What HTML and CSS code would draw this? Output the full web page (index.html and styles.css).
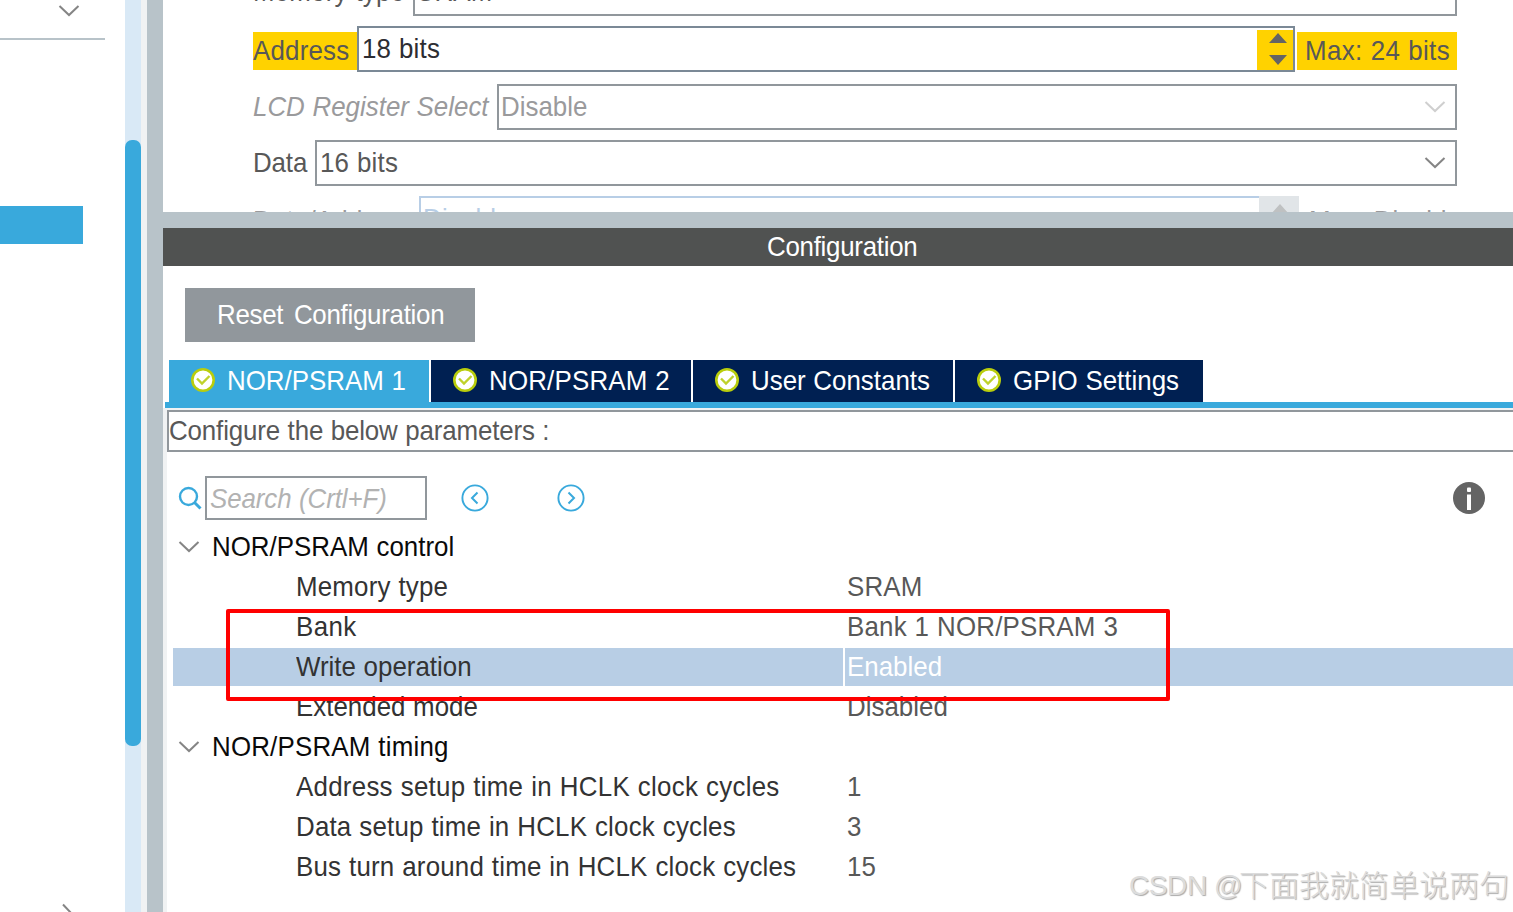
FILE: index.html
```html
<!DOCTYPE html>
<html lang="en">
<head>
    <meta charset="UTF-8">
    <meta name="viewport" content="width=device-width, initial-scale=1.0">
    <title>Configuration</title>
    <link rel="stylesheet" href="styles.css">
</head>
<body>
    <svg class="symbols">
        <symbol id="chevron" viewBox="0 0 22 14">
            <path d="M1.5 2 L11 11 L20.5 2" fill="none" stroke="currentColor" stroke-width="2"/>
        </symbol>
        <symbol id="check" viewBox="0 0 24 24">
            <circle cx="12" cy="12" r="10.7" fill="#fff" stroke="#b9cd0c" stroke-width="2.6"/>
            <path d="M6 10.5 L11 15.5 L18.5 8" fill="none" stroke="#bfd22b" stroke-width="2.4"/>
        </symbol>
    </svg>

    <div class="app">
        <div class="sidebar">
            <div class="sidebar-head"><svg class="chevron"><use href="#chevron"/></svg></div>
            <div class="sidebar-selected"></div>
            <svg class="chevron sidebar-more"><use href="#chevron"/></svg>
        </div>
        <div class="scrollbar"><div class="scroll-thumb"></div></div>
        <div class="splitter"></div>

        <div class="content">
            <div class="mode-form">
                <div class="form-row row-memory">
                    <label class="label-memory"><span class="t">Memory type</span></label>
                    <div class="field"><span class="t">SRAM</span></div>
                </div>
                <div class="form-row row-address">
                    <label class="label-address warn"><span class="t">Address</span></label>
                    <div class="field spin-field">
                        <span class="t">18 bits</span>
                        <div class="spinner warn">
                            <svg width="18" height="34" viewBox="0 0 18 34">
                                <path d="M9 1 L18 11 H0 Z M0 23 H18 L9 33 Z" fill="#646464"/>
                            </svg>
                        </div>
                    </div>
                    <div class="max warn"><span class="t ls-4">Max: 24 bits</span></div>
                </div>
                <div class="form-row disabled">
                    <label class="label-lcd"><span class="t ls-0"><i>LCD Register Select</i></span></label>
                    <div class="field"><span class="t ls-0">Disable</span><svg class="chevron"><use href="#chevron"/></svg></div>
                </div>
                <div class="form-row">
                    <label class="label-data"><span class="t ls-n2">Data</span></label>
                    <div class="field field-data"><span class="t">16 bits</span><svg class="chevron"><use href="#chevron"/></svg></div>
                </div>
                <div class="form-row row-muted">
                    <label class="label-mux"><span class="t">Data/Address</span></label>
                    <div class="field field-off"><span class="t">Disable</span></div>
                    <div class="spinner spinner-off">
                        <svg width="18" height="34" viewBox="0 0 18 34">
                            <path d="M9 1 L18 11 H0 Z M0 23 H18 L9 33 Z" fill="#bfc1c2"/>
                        </svg>
                    </div>
                    <div class="max"><span class="t">Max: Disable</span></div>
                </div>
            </div>

            <div class="config-title"><span class="t ls-n3">Configuration</span></div>

            <div class="actions">
                <button class="reset-btn"><span class="t">Reset Configuration</span></button>
            </div>

            <div class="tabs">
                <div class="tab active"><svg class="check"><use href="#check"/></svg><span class="t ls-0">NOR/PSRAM 1</span></div>
                <div class="tab"><svg class="check"><use href="#check"/></svg><span class="t">NOR/PSRAM 2</span></div>
                <div class="tab"><svg class="check"><use href="#check"/></svg><span class="t ls-0">User Constants</span></div>
                <div class="tab tab-last"><svg class="check"><use href="#check"/></svg><span class="t ls-0">GPIO Settings</span></div>
            </div>

            <div class="params">
                <div class="hint"><span class="t ls-n2">Configure the below parameters :</span></div>

                <div class="toolbar">
                    <svg class="search-icon" viewBox="0 0 24 24">
                        <circle cx="10.5" cy="10.5" r="8.5" fill="none" stroke="#39a9dc" stroke-width="2.4"/>
                        <path d="M16.5 16.5 L22.5 22.5" stroke="#39a9dc" stroke-width="3"/>
                    </svg>
                    <div class="search-box"><span class="t ls-n1">Search (Crtl+F)</span></div>
                    <svg class="nav-icon" viewBox="0 0 28 28">
                        <circle cx="14" cy="14" r="12.6" fill="none" stroke="#39a9dc" stroke-width="1.9"/>
                        <path d="M16.5 8.5 L11 14 L16.5 19.5" fill="none" stroke="#39a9dc" stroke-width="2"/>
                    </svg>
                    <svg class="nav-icon" viewBox="0 0 28 28">
                        <circle cx="14" cy="14" r="12.6" fill="none" stroke="#39a9dc" stroke-width="1.9"/>
                        <path d="M11.5 8.5 L17 14 L11.5 19.5" fill="none" stroke="#39a9dc" stroke-width="2"/>
                    </svg>
                    <svg class="info-icon" viewBox="0 0 32 32">
                        <circle cx="16" cy="16" r="16" fill="#646464"/>
                        <rect x="14" y="5.5" width="4" height="4.5" rx="1" fill="#fff"/>
                        <rect x="14" y="12.5" width="4" height="15.5" fill="#fff"/>
                    </svg>
                </div>

                <div class="tree">
                    <div class="group"><svg class="chevron"><use href="#chevron"/></svg><span class="t ls-0">NOR/PSRAM control</span></div>
                    <div class="param"><div class="name"><span class="t">Memory type</span></div><div class="value"><span class="t">SRAM</span></div></div>
                    <div class="param"><div class="name"><span class="t ls-4">Bank</span></div><div class="value"><span class="t">Bank 1 NOR/PSRAM 3</span></div></div>
                    <div class="param selected"><div class="name"><span class="t ls-0">Write operation</span></div><div class="value"><span class="t ls-0">Enabled</span></div></div>
                    <div class="param"><div class="name"><span class="t ls-0">Extended mode</span></div><div class="value"><span class="t ls-0">Disabled</span></div></div>
                    <div class="group"><svg class="chevron"><use href="#chevron"/></svg><span class="t">NOR/PSRAM timing</span></div>
                    <div class="param"><div class="name"><span class="t ls-3">Address setup time in HCLK clock cycles</span></div><div class="value"><span class="t">1</span></div></div>
                    <div class="param"><div class="name"><span class="t">Data setup time in HCLK clock cycles</span></div><div class="value"><span class="t">3</span></div></div>
                    <div class="param"><div class="name"><span class="t">Bus turn around time in HCLK clock cycles</span></div><div class="value"><span class="t">15</span></div></div>
                </div>
            </div>
        </div>
    </div>

    <div class="highlight-box"></div>
    <div class="watermark"><span>CSDN @</span>下面我就简单说两句</div>
</body>
</html>
```
FILE: styles.css
```css
* {
    box-sizing: border-box;
}

body {
    margin: 0;
    background: #fff;
    font-family: "Liberation Sans", Arial, sans-serif;
    font-size: 28px;
    line-height: 32px;
    color: #585858;
    overflow: hidden;
}

.symbols {
    position: absolute;
    width: 0;
    height: 0;
}

.app {
    display: flex;
    height: 912px;
    overflow: hidden;
}

/* slightly condensed UI text */
.t {
    display: inline-block;
    white-space: nowrap;
    transform: scaleX(.925);
    transform-origin: 0 50%;
    letter-spacing: .2px;
    word-spacing: .5px;
}

.ls-n3 { letter-spacing: -.3px; }
.ls-n2 { letter-spacing: -.15px; }
.ls-n1 { letter-spacing: -.1px; }
.ls-0 { letter-spacing: 0; }
.ls-3 { letter-spacing: .28px; }
.ls-4 { letter-spacing: .4px; }

.chevron {
    width: 22px;
    height: 14px;
    flex: none;
    color: #858585;
}

/* left column */
.sidebar {
    width: 125px;
    flex: none;
    display: flex;
    flex-direction: column;
}

.sidebar-head {
    width: 105px;
    height: 40px;
    flex: none;
    border-bottom: 2px solid #b8c3c9;
    padding: 4px 0 0 58px;
    line-height: 0;
}

.sidebar-selected {
    width: 83px;
    height: 38px;
    flex: none;
    margin-top: 166px;
    background: #39a9dc;
}

.sidebar-more {
    margin: auto 0 -9px 57px;
    transform: rotate(-90deg);
}

.scrollbar {
    width: 16px;
    flex: none;
    background: #d9e9f6;
    padding-top: 140px;
}

.scroll-thumb {
    height: 606px;
    border-radius: 7px;
    background: #39a9dc;
}

.splitter {
    width: 22px;
    flex: none;
    background: #b8c3c9;
    border-left: 6px solid #f0f2f3;
}

.content {
    flex: 1;
    min-width: 0;
    display: flex;
    flex-direction: column;
}

/* mode form */
.mode-form {
    height: 228px;
    flex: none;
    overflow: hidden;
    border-bottom: 16px solid #b8c3c9;
    padding: 0 56px 0 90px;
    display: flex;
    flex-direction: column;
    gap: 10px;
}

.form-row {
    height: 46px;
    flex: none;
    display: flex;
    align-items: center;
}

.form-row.row-memory {
    margin-top: -30px;
}

.row-memory label {
    margin-top: -2px;
}

.row-memory .field {
    padding-bottom: 3px;
}

.row-address {
    margin-bottom: 2px;
}

.form-row label {
    flex: none;
    height: 38px;
    padding-top: 3px;
}

.label-memory { width: 160px; }
.label-address { width: 104px; }
.label-lcd { width: 244px; }
.label-data { width: 62px; }
.label-mux { width: 166px; }

.row-address .label-address {
    margin-top: 4px;
}

.warn {
    background: #ffd200;
}

.field {
    flex: 1;
    height: 46px;
    border: 2px solid #91979c;
    display: flex;
    align-items: center;
    justify-content: space-between;
    padding: 0 9px 0 2px;
}

.field-data {
    padding-left: 3px;
}

.spin-field {
    border-color: #7b8996;
    color: #2d2d32;
    padding: 0 0 0 3px;
}

.spinner {
    width: 36px;
    height: 40px;
    margin-top: 2px;
    display: flex;
    align-items: center;
    justify-content: center;
    padding: 0 0 2px 6px;
}

.form-row .max {
    width: 162px;
    height: 38px;
    padding: 3px 0 0 8px;
    flex: none;
}

.row-address .max {
    width: 160px;
    margin: 4px 0 0 2px;
}

.disabled {
    color: #9a9a9c;
}

.disabled .chevron {
    color: #cfcfcf;
}

.row-muted {
    color: #9a9a9c;
}

.row-muted label,
.row-muted .max {
    margin-top: 4px;
}

.field-off {
    border-color: #b8cee6;
    border-right: 0;
    color: #b8cee6;
}

.spinner-off {
    width: 40px;
    height: 46px;
    margin: 0;
    background: #e1e5e8;
    padding: 2px 0 0 2px;
}

.row-muted .max {
    width: 158px;
    padding-left: 10px;
}

/* configuration */
.config-title {
    height: 38px;
    flex: none;
    padding: 3px 0 0 604px;
    background: #505251;
    color: #fff;
}

.actions {
    height: 94px;
    flex: none;
    padding: 22px 0 0 22px;
}

.reset-btn {
    width: 290px;
    height: 54px;
    border: 0;
    padding: 0 0 0 32px;
    background: #91979c;
    color: #fff;
    font: inherit;
    text-align: left;
}

.reset-btn .t {
    letter-spacing: -.3px;
    word-spacing: 4px;
}

.tabs {
    height: 48px;
    flex: none;
    margin-left: 2px;
    padding-left: 4px;
    display: flex;
    gap: 2px;
    border-bottom: 6px solid #39a9dc;
}

.tab {
    width: 260px;
    height: 42px;
    flex: none;
    display: flex;
    align-items: center;
    padding-left: 22px;
    background: #002052;
    color: #fff;
}

.tab.active {
    background: #39a9dc;
}

.tab-last {
    width: 248px;
}

.check {
    width: 24px;
    height: 24px;
    flex: none;
    margin: -2px 12px 0 0;
}

.params {
    flex: 1;
    border-left: 4px solid #f0f2f3;
    border-top: 2px solid #f0f2f3;
}

.hint {
    height: 42px;
    border: 2px solid #91979c;
    border-right: 0;
    padding: 3px 0 0 0;
}

.toolbar {
    height: 44px;
    margin-top: 24px;
    padding: 0 28px 0 11px;
    display: flex;
    align-items: center;
}

.search-icon {
    width: 24px;
    height: 24px;
    flex: none;
    margin-right: 3px;
}

.search-box {
    width: 222px;
    height: 44px;
    flex: none;
    border: 2px solid #91979c;
    padding: 5px 0 0 3px;
    color: #b2b2b2;
    font-style: italic;
}

.nav-icon {
    width: 28px;
    height: 28px;
    flex: none;
    margin-left: 34px;
}

.nav-icon + .nav-icon {
    margin-left: 68px;
}

.info-icon {
    width: 32px;
    height: 32px;
    flex: none;
    margin-left: auto;
}

.tree {
    margin-top: 8px;
    padding-left: 6px;
}

.group,
.param {
    height: 40px;
    display: flex;
    padding-top: 3px;
}

.group {
    padding-left: 5px;
    color: #0a0a0a;
}

.group .chevron {
    margin: 9px 12px 0 0;
}

.name {
    width: 672px;
    padding-left: 123px;
    color: #333;
}

.value {
    padding-left: 2px;
}

.param.selected {
    height: 38px;
    margin-bottom: 2px;
    padding-top: 0;
    background: #b8cee5;
}

.selected .name,
.selected .value {
    padding-top: 3px;
}

.selected .value {
    border-left: 2px solid #fff;
    margin-left: -2px;
    color: #fff;
}

/* red frame drawn over the tree rows */
.highlight-box {
    position: absolute;
    left: 226px;
    top: 609px;
    width: 944px;
    height: 92px;
    border: 4px solid #f00;
    border-radius: 2px;
}

.watermark {
    position: absolute;
    left: 1129px;
    top: 868px;
    display: flex;
    font-family: "Liberation Sans", "Noto Sans CJK SC", sans-serif;
    font-size: 30px;
    font-weight: 300;
    line-height: 36px;
    color: #dcdcdc;
    text-shadow: 1px 1px 1px #aaa;
    white-space: nowrap;
}

.watermark span {
    width: 110px;
    font-size: 28px;
    letter-spacing: -.4px;
}
```
